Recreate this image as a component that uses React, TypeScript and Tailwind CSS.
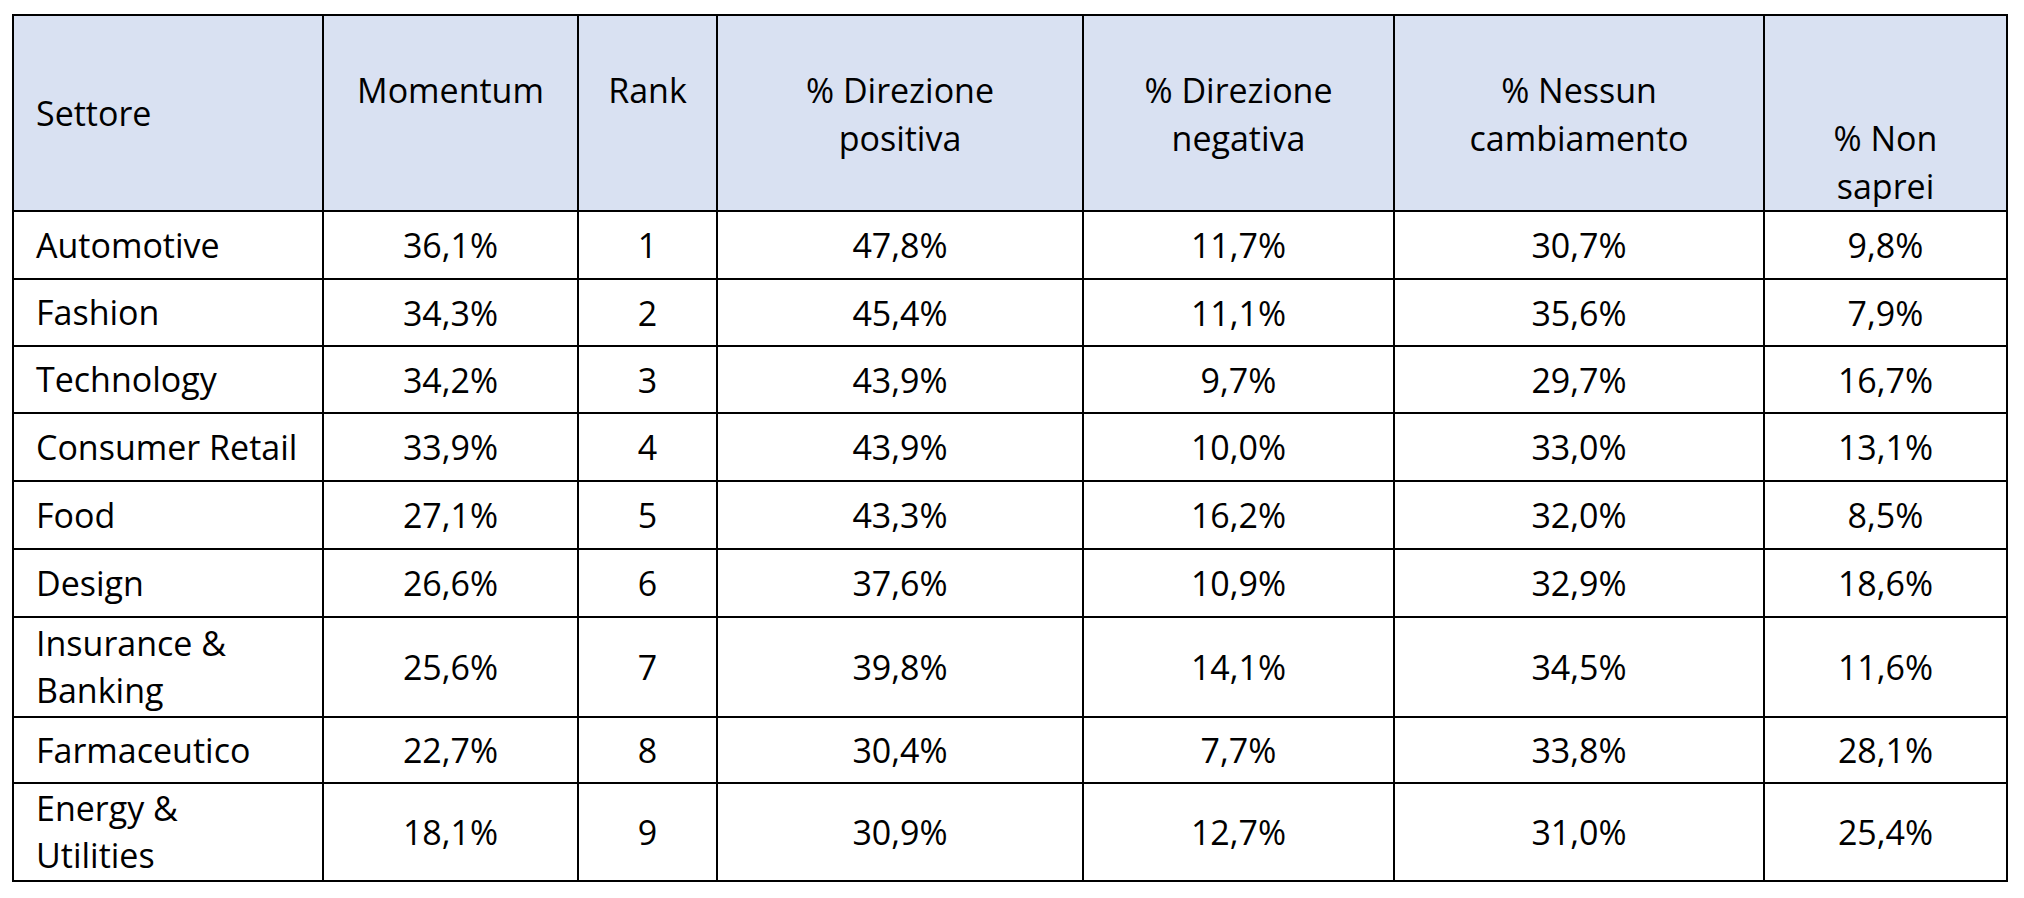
const rows: [string[], string, string, string, string, string, string][] = [
  [['Automotive'], '36,1%', '1', '47,8%', '11,7%', '30,7%', '9,8%'],
  [['Fashion'], '34,3%', '2', '45,4%', '11,1%', '35,6%', '7,9%'],
  [['Technology'], '34,2%', '3', '43,9%', '9,7%', '29,7%', '16,7%'],
  [['Consumer Retail'], '33,9%', '4', '43,9%', '10,0%', '33,0%', '13,1%'],
  [['Food'], '27,1%', '5', '43,3%', '16,2%', '32,0%', '8,5%'],
  [['Design'], '26,6%', '6', '37,6%', '10,9%', '32,9%', '18,6%'],
  [['Insurance &', 'Banking'], '25,6%', '7', '39,8%', '14,1%', '34,5%', '11,6%'],
  [['Farmaceutico'], '22,7%', '8', '30,4%', '7,7%', '33,8%', '28,1%'],
  [['Energy &', 'Utilities'], '18,1%', '9', '30,9%', '12,7%', '31,0%', '25,4%'],
];

function HeadCell({ lines, align }: { lines: string[]; align: 'top' | 'bottom' }) {
  return (
    <div
      className={`bg-[#D9E1F2] flex flex-col items-center text-center ${
        align === 'top' ? 'justify-start pt-[50px]' : 'justify-end'
      }`}
    >
      {lines.map((l) => (
        <span key={l}>{l}</span>
      ))}
    </div>
  );
}

export default function App() {
  return (
    <div className="min-h-screen bg-white pl-[12px] pt-[14px] font-['Open_Sans',sans-serif] text-[34px] leading-[48px] text-black">
      <div className="grid w-max grid-cols-[308px_253px_137px_364px_309px_368px_241px] grid-rows-[194px_66px_65px_65px_66px_66px_66px_98px_64px_96px] gap-[2px] bg-black p-[2px]">
        <div className="bg-[#D9E1F2] flex items-center pl-[22px]">Settore</div>
        <HeadCell lines={['Momentum']} align="top" />
        <HeadCell lines={['Rank']} align="top" />
        <HeadCell lines={['% Direzione', 'positiva']} align="top" />
        <HeadCell lines={['% Direzione', 'negativa']} align="top" />
        <HeadCell lines={['% Nessun', 'cambiamento']} align="top" />
        <HeadCell lines={['% Non', 'saprei']} align="bottom" />

        {rows.map(([name, ...vals]) => (
          <div key={name.join(' ')} className="contents">
            <div className="bg-white flex flex-col justify-center pl-[22px] leading-[47px]">
              {name.map((n) => (
                <span key={n}>{n}</span>
              ))}
            </div>
            {vals.map((v, i) => (
              <div key={i} className="bg-white flex items-center justify-center">
                {v}
              </div>
            ))}
          </div>
        ))}
      </div>
    </div>
  );
}
